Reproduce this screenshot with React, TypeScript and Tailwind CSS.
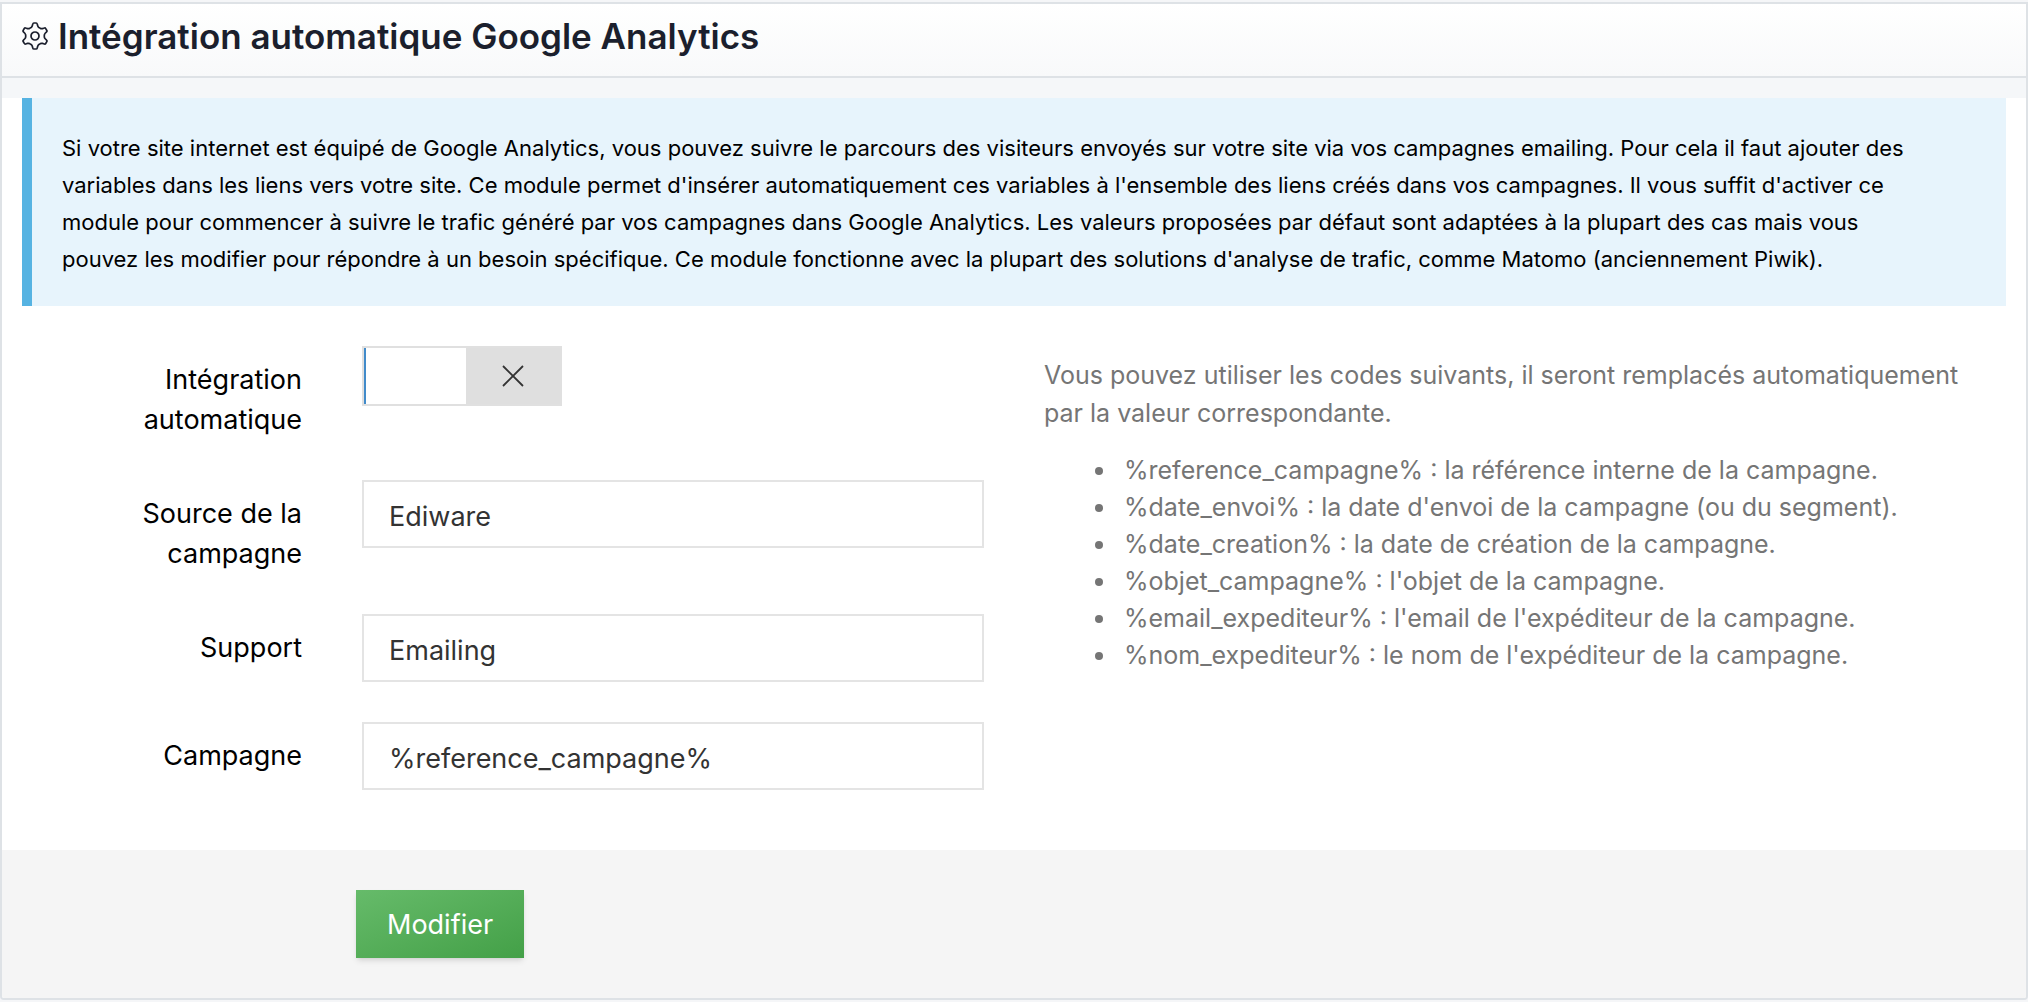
import { useState } from 'react';
import type { ReactNode } from 'react';

type FormValues = {
    source: string;
    support: string;
    campagne: string;
}

const CODES = [
    { code: '%reference_campagne%', text: 'la référence interne de la campagne.' },
    { code: '%date_envoi%', text: "la date d'envoi de la campagne (ou du segment)." },
    { code: '%date_creation%', text: 'la date de création de la campagne.' },
    { code: '%objet_campagne%', text: "l'objet de la campagne." },
    { code: '%email_expediteur%', text: "l'email de l'expéditeur de la campagne." },
    { code: '%nom_expediteur%', text: "le nom de l'expéditeur de la campagne." },
];

const FIELDS: { name: keyof FormValues; label: string }[] = [
    { name: 'source', label: 'Source de la campagne' },
    { name: 'support', label: 'Support' },
    { name: 'campagne', label: 'Campagne' },
];

// one half of the gear, the other half is the same path turned by 180deg
const GEAR_HALF =
    'M0 -13H1.1Q2 -13 2.2 -12.1L2.7 -10.2Q3 -9.1 3.9 -8.5L5.41 -7.63Q6.38 -7.15 7.48 -7.44L9.38 -7.95Q10.26 -8.23 10.71 -7.45L11.81 -5.55Q12.26 -4.77 11.58 -4.15L10.18 -2.76Q9.38 -1.95 9.31 -.87V.87Q9.38 1.95 10.18 2.76L11.58 4.15Q12.26 4.77 11.81 5.55L10.71 7.45Q10.26 8.23 9.38 7.95L7.48 7.44Q6.38 7.15 5.41 7.63L3.9 8.5Q3 9.1 2.7 10.2L2.2 12.1Q2 13 1.1 13H0';

function GearIcon() {
    return (
        <svg
            viewBox="-13 -14 26 28"
            className="w-[26px] h-7 shrink-0"
            fill="none"
            stroke="currentColor"
            strokeWidth="1.7"
            aria-hidden="true"
        >
            <path d={GEAR_HALF} />
            <path d={GEAR_HALF} transform="rotate(180)" />
            <circle r="4" />
        </svg>
    );
}

function CrossIcon() {
    return (
        <svg viewBox="0 0 22 22" className="size-[22px]" stroke="currentColor" strokeWidth="1.8" aria-hidden="true">
            <path d="M1 1l20 20M21 1L1 21" />
        </svg>
    );
}

function FormRow({ id, label, children }: { id: string; label: string; children: ReactNode }) {
    return (
        <div className="flex gap-[60px]">
            <label htmlFor={id} className="w-[300px] shrink-0 pl-[120px] pt-3.5 text-right text-[27px] leading-10 text-black">
                {label}
            </label>
            <div className="flex-1 min-w-0">{children}</div>
        </div>
    );
}

export default function App() {
    const [enabled, setEnabled] = useState(false);
    const [values, setValues] = useState<FormValues>({
        source: 'Ediware',
        support: 'Emailing',
        campagne: '%reference_campagne%',
    });

    return (
        <div className="py-0.5 bg-[#f5f6f8] font-['Inter','Liberation_Sans',sans-serif]">
            <form
                className="border-2 border-[#dee2e6] rounded-b bg-white overflow-hidden"
                onSubmit={(e) => e.preventDefault()}
            >
                <header className="flex items-center gap-2.5 h-[74px] pl-5 pb-2 border-b-2 border-[#dee2e6] bg-linear-to-b from-white to-[#f8f9fa] text-[#1b1f2d]">
                    <GearIcon />
                    <h1 className="text-[35px] leading-10 font-semibold">Intégration automatique Google Analytics</h1>
                </header>

                <div className="h-5 bg-[#f5f7f9]" />

                <p className="mx-5 pt-8 pb-7 pl-[30px] pr-20 border-l-10 border-[#56b3e2] bg-[#e7f4fc] text-[22px] leading-[37px] text-black">
                    Si votre site internet est équipé de Google Analytics, vous pouvez suivre le parcours des visiteurs
                    envoyés sur votre site via vos campagnes emailing. Pour cela il faut ajouter des variables dans les
                    liens vers votre site. Ce module permet d'insérer automatiquement ces variables à l'ensemble des liens
                    créés dans vos campagnes. Il vous suffit d'activer ce module pour commencer à suivre le trafic généré
                    par vos campagnes dans Google Analytics. Les valeurs proposées par défaut sont adaptées à la plupart
                    des cas mais vous pouvez les modifier pour répondre à un besoin spécifique. Ce module fonctionne avec
                    la plupart des solutions d'analyse de trafic, comme Matomo (anciennement Piwik).
                </p>

                <div className="grid grid-cols-2 pt-10 pb-[60px]">
                    <div className="flex flex-col gap-10 pr-[30px]">
                        <FormRow id="auto" label="Intégration automatique">
                            <button
                                id="auto"
                                type="button"
                                role="switch"
                                aria-checked={enabled}
                                onClick={() => setEnabled(!enabled)}
                                className="flex w-[200px] h-[60px] border-2 border-[#e0e0e0] bg-[#dfdfdf] text-[#333]"
                            >
                                <span className="w-[102px] h-full border-l-2 border-[#428bca] bg-white" />
                                <span className="flex flex-1 h-full items-center justify-center">
                                    <CrossIcon />
                                </span>
                            </button>
                        </FormRow>
                        {FIELDS.map((f) => (
                            <FormRow key={f.name} id={f.name} label={f.label}>
                                <input
                                    id={f.name}
                                    type="text"
                                    className="block w-full h-[68px] px-[25px] pt-1 border-2 border-[#e4e4e4] bg-white text-[27px] text-[#333]"
                                    value={values[f.name]}
                                    onChange={(e) => setValues({ ...values, [f.name]: e.target.value })}
                                />
                            </FormRow>
                        ))}
                    </div>

                    <div className="pt-2.5 px-[30px] text-[25px] text-[#757575]">
                        <p className="leading-[38px]">
                            Vous pouvez utiliser les codes suivants, il seront remplacés automatiquement par la valeur
                            correspondante.
                        </p>
                        <ul className="mt-5 pl-[74px] list-disc leading-[37px]">
                            {CODES.map((c) => (
                                <li key={c.code} className="pl-1.5">
                                    {c.code} : {c.text}
                                </li>
                            ))}
                        </ul>
                    </div>
                </div>

                <footer className="py-10 pl-[354px] bg-[#f5f5f5]">
                    <button
                        type="submit"
                        className="block h-[68px] px-[31px] pt-0.5 bg-linear-to-br from-[#66bb6a] to-[#43a047] text-[27px] text-white shadow-md"
                    >
                        Modifier
                    </button>
                </footer>
            </form>
        </div>
    );
}
